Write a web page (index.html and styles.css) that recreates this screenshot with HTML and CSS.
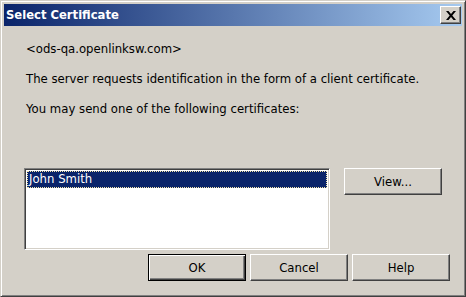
FILE: index.html
```html
<!DOCTYPE html>
<html lang="en">
<head>
  <meta charset="UTF-8" />
  <title>Select Certificate</title>
  <link rel="stylesheet" href="styles.css">
</head>
<body>
  <div class="window">
    <div class="titlebar">
      <span class="title">Select Certificate</span>
      <button class="close-btn" type="button" aria-label="Close">
        <svg width="10" height="9" viewBox="0 0 10 9">
          <path d="M0 0h2.5l2.5 3 2.5-3h2.5L6.3 4.5 10 9H7.5L5 6 2.5 9H0l3.7-4.5z" fill="#000"/>
        </svg>
      </button>
    </div>

    <div class="content">
      <p class="message">&lt;ods-qa.openlinksw.com&gt;</p>
      <p class="message">The server requests identification in the form of a client certificate.</p>
      <p class="message">You may send one of the following certificates:</p>

      <div class="cert-row">
        <div class="listbox">
          <div class="list-item selected">John Smith</div>
        </div>
        <button class="btn" type="button">View...</button>
      </div>

      <div class="actions">
        <button class="btn btn-default" type="button">OK</button>
        <button class="btn" type="button">Cancel</button>
        <button class="btn" type="button">Help</button>
      </div>
    </div>
  </div>
</body>
</html>
```

FILE: styles.css
```css
* {
  margin: 0;
  padding: 0;
  box-sizing: border-box;
}

body {
  background-color: #d4d0c8;
  font-family: 'DejaVu Sans', Verdana, sans-serif;
  font-size: 11.7px;
  color: #000;
}

.window {
  width: 466px;
  height: 297px;
  display: flex;
  flex-direction: column;
  padding: 3px;
  background-color: #d4d0c8;
  border: 1px solid;
  border-color: #d4d0c8 #404040 #404040 #d4d0c8;
  box-shadow: inset 1px 1px #fff, inset -1px -1px #808080;
}

.titlebar {
  height: 22px;
  display: flex;
  align-items: center;
  justify-content: space-between;
  padding: 0 1px 0 2px;
  background: linear-gradient(to right, #0a246a, #a6caf0);
}

.title {
  color: #fff;
  font-weight: bold;
  font-size: 11.6px;
}

.close-btn {
  width: 21px;
  height: 18px;
  display: flex;
  align-items: center;
  justify-content: center;
  background-color: #d4d0c8;
  border: 1px solid;
  border-color: #fff #404040 #404040 #fff;
  box-shadow: inset -1px -1px #808080;
}

.content {
  flex: 1;
  padding: 17px 12px 0 20px;
}

.message {
  line-height: 13px;
  padding-left: 2px;
  margin-bottom: 17px;
}

.cert-row {
  display: flex;
  align-items: flex-start;
  gap: 14px;
  margin-top: 52px;
}

.listbox {
  width: 306px;
  height: 82px;
  background-color: #fff;
  border: 1px solid;
  border-color: #808080 #fff #fff #808080;
  box-shadow: inset 1px 1px #404040, inset -1px -1px #d4d0c8;
  padding: 2px;
}

.list-item {
  height: 17px;
  line-height: 15px;
  padding-left: 1px;
}

.list-item.selected {
  background-color: #0a246a;
  color: #fff;
  border: 1px dotted #f2e4a8;
}

.btn {
  width: 98px;
  height: 27px;
  font-family: inherit;
  font-size: inherit;
  color: #000;
  background-color: #d4d0c8;
  border: 1px solid;
  border-color: #fff #404040 #404040 #fff;
  box-shadow: inset -1px -1px #808080;
}

.btn-default {
  border-color: #000;
  box-shadow: inset 1px 1px #fff, inset -1px -1px #404040, inset -2px -2px #808080;
}

.actions {
  display: flex;
  justify-content: flex-end;
  gap: 4px;
  margin-top: 4px;
}
```
